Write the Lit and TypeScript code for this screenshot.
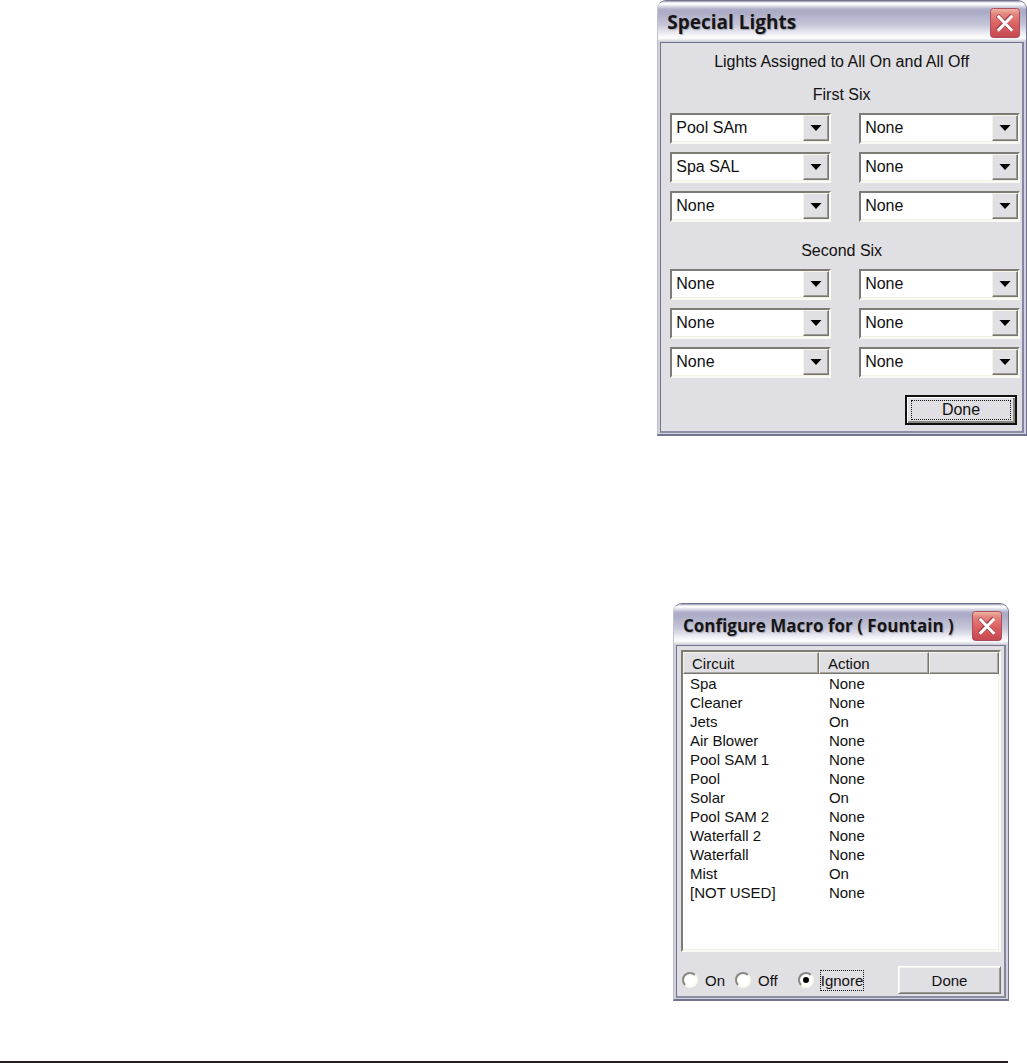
import { LitElement, html, css } from "lit";
import { customElement, property } from "lit/decorators.js";

const LIGHTS = ["None", "Pool SAm", "Spa SAL"];

const FIRST_SIX = ["Pool SAm", "None", "Spa SAL", "None", "None", "None"];
const SECOND_SIX = ["None", "None", "None", "None", "None", "None"];

const CIRCUITS: [string, string][] = [
  ["Spa", "None"],
  ["Cleaner", "None"],
  ["Jets", "On"],
  ["Air Blower", "None"],
  ["Pool SAM 1", "None"],
  ["Pool", "None"],
  ["Solar", "On"],
  ["Pool SAM 2", "None"],
  ["Waterfall 2", "None"],
  ["Waterfall", "None"],
  ["Mist", "On"],
  ["[NOT USED]", "None"],
];

const button = css`
  .button {
    box-sizing: border-box;
    padding: 0;
    font: inherit;
    color: #111;
    background: #e0dfe3;
    border: 1px solid;
    border-color: #fff #77756f #77756f #fff;
    box-shadow: inset 1px 1px #f6f4e6, inset -1px -1px #9b9993;
  }
`;

@customElement("xp-window")
class XpWindow extends LitElement {
  @property() heading = "";

  static styles = css`
    :host {
      display: block;
    }
    .frame {
      border: 1px solid #74738f;
      border-left-color: #c0c0cf;
      border-bottom: 2px solid #74738f;
      border-radius: 9px 9px 0 0;
      background: #d2d2de;
      padding: 0 2px 1px;
    }
    .bar {
      display: flex;
      align-items: center;
      justify-content: space-between;
      margin: 0 -2px;
      padding: 6px 6px 4px 9px;
      border-radius: 8px 8px 0 0;
      background: linear-gradient(#9494b0 0, #fff 2px, #fff 3px, #b0b0ca 8px, #aaaac6 11px, #c6c6d9 24px, #f4f4f8 34px, #fff 37px, #c9c9d6 100%);
    }
    .title {
      margin: 0;
      font-family: "Open Sans", "Noto Sans", sans-serif;
      font-weight: bold;
      font-size: var(--title-size, 18px);
      line-height: 31px;
      color: #161618;
      text-shadow: 1px 1px 1px #a4a4b6;
      white-space: nowrap;
    }
    .close {
      flex: none;
      width: 30px;
      height: 30px;
      padding: 0;
      border: 0;
      background: none;
    }
    .close svg {
      display: block;
      width: 100%;
      height: 100%;
    }
    .body {
      border: 1px solid #74738f;
      border-right: 2px solid #8685a0;
      border-bottom: 2px solid #8e8da6;
      background: #e0dfe3;
    }
  `;

  render() {
    return html`
      <section class="frame" aria-label=${this.heading}>
        <header class="bar">
          <h2 class="title">${this.heading}</h2>
          <button class="close" type="button" aria-label="Close">
            <svg viewBox="0 0 31 31" aria-hidden="true">
              <defs>
                <linearGradient id="red" x1="0" y1="0" x2="0" y2="1">
                  <stop offset="0" stop-color="#f0b8a8" />
                  <stop offset="0.2" stop-color="#e2847c" />
                  <stop offset="0.5" stop-color="#dc6464" />
                  <stop offset="1" stop-color="#c44850" />
                </linearGradient>
              </defs>
              <rect x="0.5" y="0.5" width="30" height="30" rx="3" fill="url(#red)" stroke="#a8485a" />
              <path d="M7.500 7.500 22.500 23M22.500 7.500 7.500 23" stroke="#a03c46" stroke-width="4.500" />
              <path d="M8 8 23 23.500M23 8 8 23.500" stroke="#fff" stroke-width="3.200" />
            </svg>
          </button>
        </header>
        <div class="body"><slot></slot></div>
      </section>
    `;
  }
}

@customElement("light-picker")
class LightPicker extends LitElement {
  @property() value = "None";
  @property() label = "";

  static styles = css`
    :host {
      display: block;
      min-width: 0;
    }
    .combo {
      display: grid;
      grid-template-columns: minmax(0, 1fr) 26px;
      grid-template-rows: 26px;
      padding-bottom: 1px;
      border: 2px solid;
      border-color: #7d7b75 #fafaf4 #fafaf4 #7d7b75;
      background: #fff;
      box-shadow: inset -1px -1px #f1f0e2;
    }
    .list {
      grid-area: 1 / 1 / 2 / 3;
      appearance: none;
      width: 100%;
      height: 26px;
      margin: 0;
      padding: 0 28px 0 4px;
      border: 0;
      border-radius: 0;
      background: none;
      font: inherit;
      line-height: 26px;
      color: #111;
    }
    .arrow {
      grid-area: 1 / 2;
      display: grid;
      place-items: center;
      pointer-events: none;
      background: #e0dfe3;
      border: 1px solid;
      border-color: #f6f4e6 #77756f #77756f #f6f4e6;
      box-shadow: inset -1px -1px #9b9993;
    }
    .arrow svg {
      display: block;
      width: 12px;
      height: 6px;
    }
  `;

  render() {
    return html`
      <div class="combo">
        <select class="list" aria-label=${this.label}>
          ${LIGHTS.map((n) => html`<option ?selected=${n === this.value}>${n}</option>`)}
        </select>
        <span class="arrow">
          <svg viewBox="0 0 12 6" aria-hidden="true"><path d="M0.500 0H11.500L6 6Z" fill="#000" /></svg>
        </span>
      </div>
    `;
  }
}

@customElement("special-lights")
class SpecialLights extends LitElement {
  static styles = [
    button,
    css`
      :host {
        display: block;
        font: 16px/30px "Liberation Sans", Arial, sans-serif;
        color: #111;
        --title-size: 19px;
      }
      .content {
        display: flex;
        flex-direction: column;
        padding: 4px 2px 6px;
      }
      .intro {
        margin: 0;
        text-align: center;
      }
      .group {
        margin: 0 0 11px;
      }
      .group-name {
        margin: 0;
        font: inherit;
        line-height: 36px;
        text-align: center;
      }
      .grid {
        display: grid;
        grid-template-columns: 1fr 1fr;
        gap: 8px 28px;
        padding-left: 7px;
      }
      .done {
        align-self: flex-end;
        width: 112px;
        height: 30px;
        margin: 6px 3px 0;
        padding: 3px 4px;
        line-height: 20px;
        border: 2px solid #111;
        box-shadow: inset 1px 1px #fff, inset -2px -2px #8a8882;
      }
      .focus {
        display: block;
        border: 1px dotted #111;
        line-height: 18px;
      }
    `,
  ];

  private group(name: string, values: string[]) {
    return html`
      <section class="group">
        <h3 class="group-name">${name}</h3>
        <div class="grid">
          ${values.map((v, i) => html`<light-picker .value=${v} .label=${`${name}, light ${i + 1}`}></light-picker>`)}
        </div>
      </section>
    `;
  }

  render() {
    return html`
      <xp-window heading="Special Lights">
        <div class="content">
          <p class="intro">Lights Assigned to All On and All Off</p>
          ${this.group("First Six", FIRST_SIX)} ${this.group("Second Six", SECOND_SIX)}
          <button class="button done" type="button"><span class="focus">Done</span></button>
        </div>
      </xp-window>
    `;
  }
}

@customElement("macro-config")
class MacroConfig extends LitElement {
  static styles = [
    button,
    css`
      :host {
        display: block;
        font: 15px/19px "Liberation Sans", Arial, sans-serif;
        color: #111;
        --title-size: 17px;
      }
      .content {
        padding: 4px 3px 2px 4px;
      }
      .list {
        min-height: 298px;
        border: 2px solid;
        border-color: #7d7b75 #fafaf4 #fafaf4 #7d7b75;
        background: #fff;
        box-shadow: inset -1px -1px #f1f0e2;
      }
      .table {
        width: 100%;
        border-collapse: separate;
        border-spacing: 0;
        table-layout: fixed;
      }
      .circuit {
        width: 43%;
      }
      .action {
        width: 35%;
      }
      .head {
        height: 22px;
        padding: 0 8px;
        box-sizing: border-box;
        font-weight: normal;
        text-align: left;
        background: #e0dfe3;
        border: 1px solid;
        border-color: #f6f4e6 #77756f #77756f #f6f4e6;
        box-shadow: inset -1px -1px #a9a7a3;
      }
      .cell {
        padding: 0 7px;
        white-space: nowrap;
      }
      .cell + .cell {
        padding: 0 10px;
      }
      .controls {
        display: flex;
        align-items: center;
        justify-content: space-between;
        margin-top: 14px;
      }
      .choices {
        display: flex;
        gap: 9px;
        margin: 0;
        padding: 0 0 0 1px;
        border: 0;
      }
      .choice {
        display: flex;
        align-items: center;
        gap: 6px;
      }
      .wide {
        margin-left: 10px;
      }
      .radio {
        appearance: none;
        display: grid;
        place-items: center;
        box-sizing: border-box;
        width: 16px;
        height: 16px;
        margin: 0;
        border: 2px solid;
        border-color: #8a8882 #faf9ee #faf9ee #8a8882;
        border-radius: 50%;
        background: #fff;
      }
      .radio:checked::before {
        content: "";
        width: 6px;
        height: 6px;
        border-radius: 50%;
        background: #000;
      }
      .text {
        border: 1px solid transparent;
      }
      .radio:checked + .text {
        border: 1px dotted #111;
      }
      .done {
        width: 103px;
        height: 28px;
      }
    `,
  ];

  render() {
    return html`
      <xp-window heading="Configure Macro for ( Fountain )">
        <div class="content">
          <div class="list">
            <table class="table">
              <thead>
                <tr>
                  <th class="head circuit" scope="col">Circuit</th>
                  <th class="head action" scope="col">Action</th>
                  <td class="head"></td>
                </tr>
              </thead>
              <tbody>
                ${CIRCUITS.map(([c, a]) => html`<tr><td class="cell">${c}</td><td class="cell">${a}</td><td></td></tr>`)}
              </tbody>
            </table>
          </div>
          <div class="controls">
            <fieldset class="choices" aria-label="Action">
              <label class="choice"><input class="radio" type="radio" name="action" /><span class="text">On</span></label>
              <label class="choice"><input class="radio" type="radio" name="action" /><span class="text">Off</span></label>
              <label class="choice wide"><input class="radio" type="radio" name="action" checked /><span class="text">Ignore</span></label>
            </fieldset>
            <button class="button done" type="button">Done</button>
          </div>
        </div>
      </xp-window>
    `;
  }
}

@customElement("app-root")
class AppRoot extends LitElement {
  static styles = css`
    :host {
      display: block;
      background: #fff;
    }
    .page {
      display: flex;
      flex-direction: column;
      align-items: flex-end;
    }
    .lights {
      width: 36%;
      min-width: 300px;
    }
    .macro {
      width: 336px;
      max-width: 100%;
      margin: 167px 18px 60px;
    }
    .rule {
      align-self: stretch;
      margin: 0 19px 0 0;
      border: 0;
      border-top: 2px solid #231f20;
    }
  `;

  render() {
    return html`
      <main class="page">
        <special-lights class="lights"></special-lights>
        <macro-config class="macro"></macro-config>
        <hr class="rule" />
      </main>
    `;
  }
}
